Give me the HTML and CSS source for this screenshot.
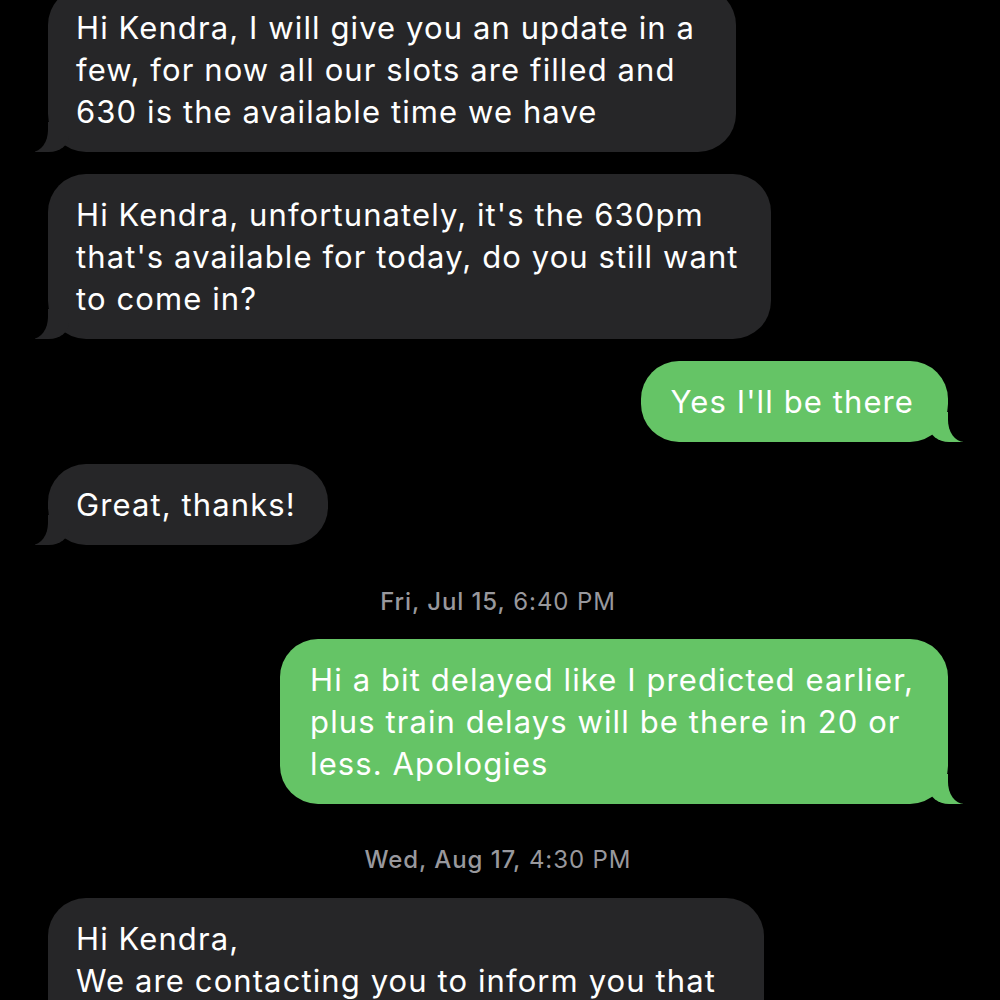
FILE: index.html
```html
<!DOCTYPE html>
<html>
<head>
<meta name="viewport" content="width=device-width, initial-scale=1">
<link rel="stylesheet" href="styles.css">
</head>
<body>

<div class="thread">
  <div class="msg in first">Hi Kendra, I will give you an update in a<br>few, for now all our slots are filled and<br>630 is the available time we have</div>

  <div class="msg in">Hi Kendra, unfortunately, it's the 630pm<br>that's available for today, do you still want<br>to come in?</div>

  <div class="msg out">Yes I'll be there</div>

  <div class="msg in">Great, thanks!</div>

  <div class="stamp"><b>Fri, Jul 15,</b> 6:40 PM</div>

  <div class="msg out">Hi a bit delayed like I predicted earlier,<br>plus train delays will be there in 20 or<br>less. Apologies</div>

  <div class="stamp second"><b>Wed, Aug 17,</b> 4:30 PM</div>

  <div class="msg in last">Hi Kendra,<br>We are contacting you to inform you that</div>
</div>

</body>
</html>
```

FILE: styles.css
```css
* {box-sizing: border-box;}

html, body {
  margin: 0;
  background: #000;
  height: 100%;
  overflow: hidden;
}

body {
  font-family: Inter, "Liberation Sans", Arial, sans-serif;
  color: #fff;
}

/* conversation column */
.thread {
  display: flex;
  flex-direction: column;
  gap: 22px;
  padding: 0 52px 0 48px;
}

/* message bubbles */
.msg {
  position: relative;
  font-size: 31px;
  letter-spacing: 1.1px;
  line-height: 42px;
  padding: 20px 32px 19px 28px;
  border-radius: 38px;
  white-space: nowrap;
  width: fit-content;
}

.msg.first {
  margin-top: -13px;
  padding-right: 41px;
}

.msg.last {
  padding-right: 48px;
  padding-bottom: 40px;
}

/* received - grey, on the left */
.msg.in {
  align-self: flex-start;
  background: #262628;
}

/* sent - green, on the right */
.msg.out {
  align-self: flex-end;
  background: #65c466;
  padding: 20px 34px 19px 30px;
}

/* bubble tails */
.msg::before, .msg::after {
  content: "";
  position: absolute;
  bottom: 0;
  height: 30px;
}

.msg.in::before {
  left: -13px;
  width: 34px;
  background: #262628;
  border-bottom-right-radius: 20px 16px;
}

.msg.in::after {
  left: -30px;
  width: 30px;
  background: #000;
  border-bottom-right-radius: 16px 22px;
}

.msg.out::before {
  right: -15px;
  width: 34px;
  background: #65c466;
  border-bottom-left-radius: 20px 16px;
}

.msg.out::after {
  right: -32px;
  width: 32px;
  background: #000;
  border-bottom-left-radius: 16px 22px;
}

/* date / time separators */
.stamp {
  align-self: center;
  font-size: 24px;
  letter-spacing: 0.9px;
  line-height: 26px;
  color: #98989d;
  margin: 22px 0 2px 0;
}

.stamp b {
  font-weight: 500;
}

.stamp.second {
  margin: 21px 0 3px 0;
}
```
